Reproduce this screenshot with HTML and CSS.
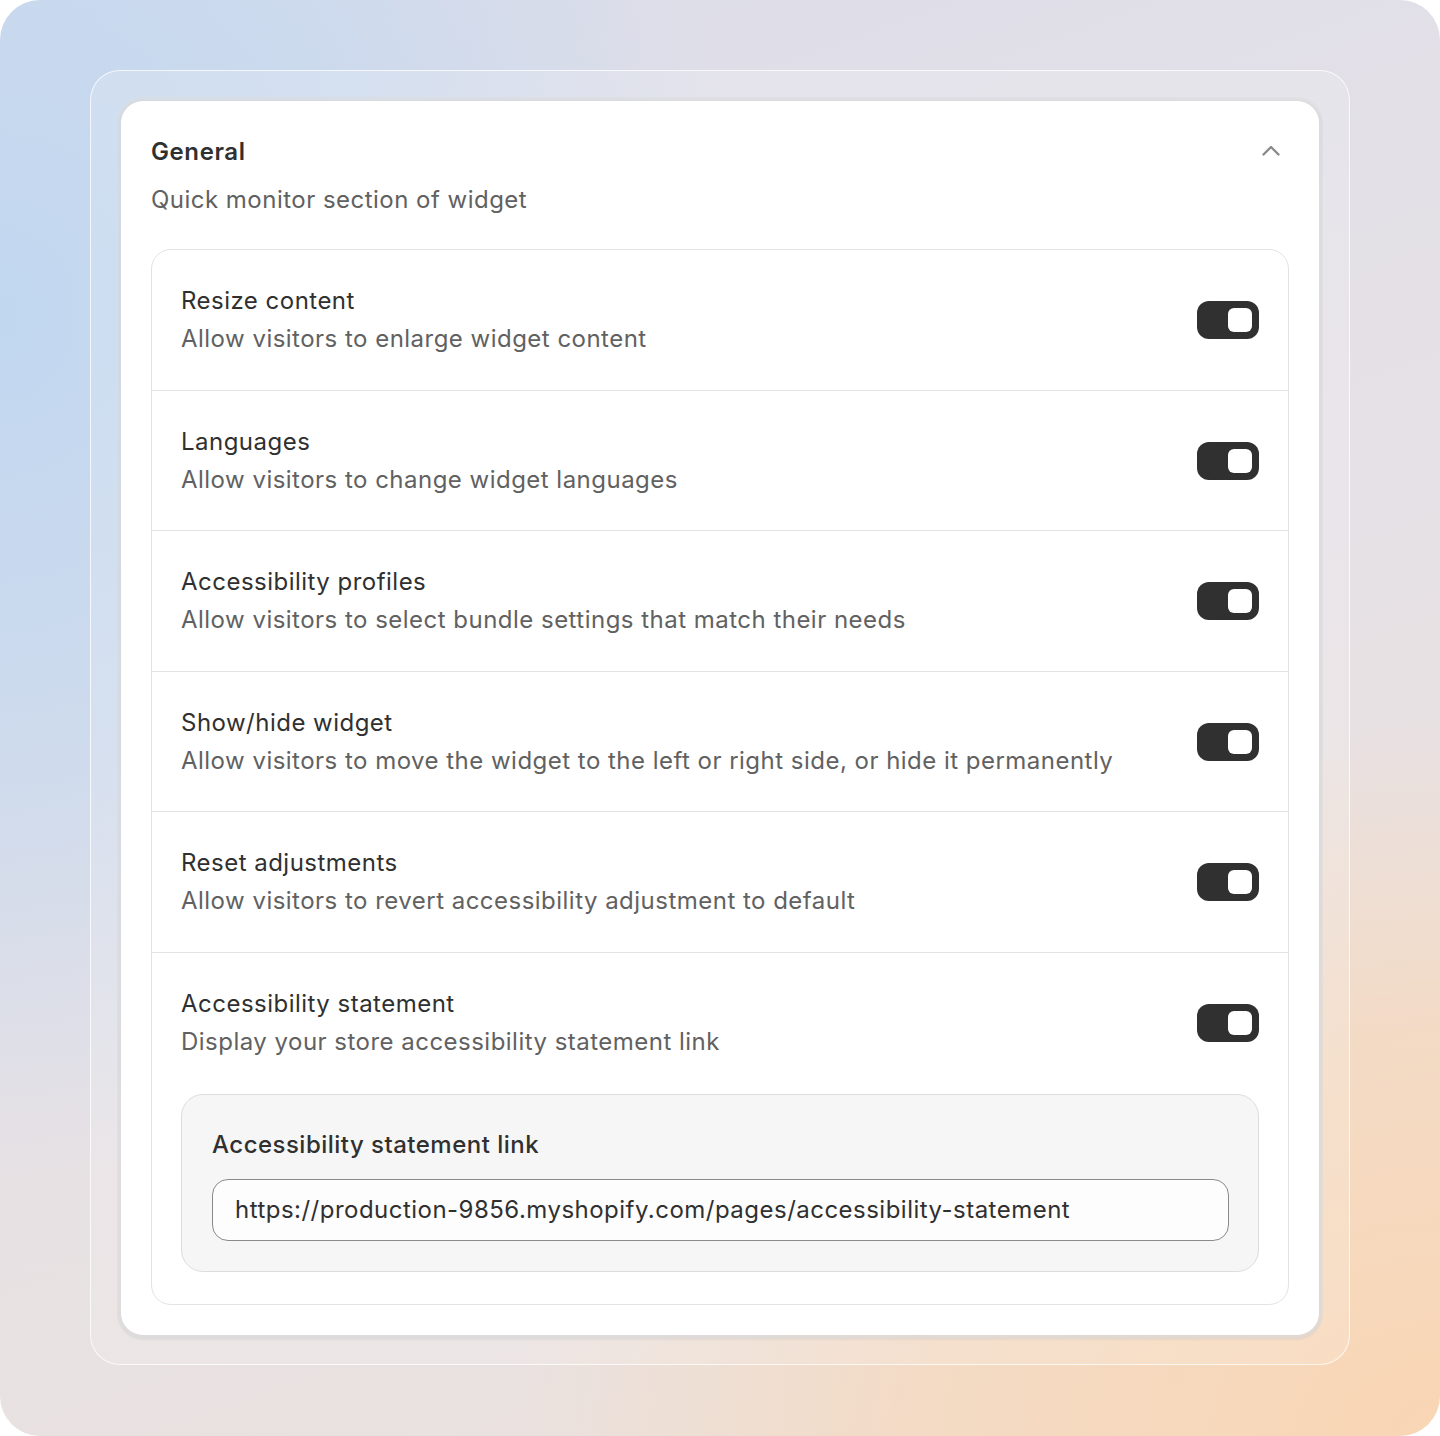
FILE: index.html
```html
<!DOCTYPE html>
<html lang="en">
<head>
<meta charset="utf-8">
<title>General settings</title>
<link rel="stylesheet" href="styles.css">
</head>
<body>
<div class="backdrop">
  <div class="frame">
    <section class="card">
      <header class="card-head">
        <div class="head-text">
          <h2 class="card-title">General</h2>
          <p class="card-sub">Quick monitor section of widget</p>
        </div>
        <button class="collapse" aria-label="Collapse section">
          <svg width="22" height="22" viewBox="0 0 22 22" fill="none"><path d="M3.5 14.5L11 7L18.5 14.5" stroke="#8a8a8a" stroke-width="2.4" stroke-linecap="round" stroke-linejoin="round"/></svg>
        </button>
      </header>

      <div class="list">
        <div class="row">
          <div class="row-main">
            <div class="row-text">
              <div class="row-title">Resize content</div>
              <div class="row-desc">Allow visitors to enlarge widget content</div>
            </div>
            <span class="toggle"><span class="knob"></span></span>
          </div>
        </div>
        <div class="row">
          <div class="row-main">
            <div class="row-text">
              <div class="row-title">Languages</div>
              <div class="row-desc">Allow visitors to change widget languages</div>
            </div>
            <span class="toggle"><span class="knob"></span></span>
          </div>
        </div>
        <div class="row">
          <div class="row-main">
            <div class="row-text">
              <div class="row-title">Accessibility profiles</div>
              <div class="row-desc">Allow visitors to select bundle settings that match their needs</div>
            </div>
            <span class="toggle"><span class="knob"></span></span>
          </div>
        </div>
        <div class="row">
          <div class="row-main">
            <div class="row-text">
              <div class="row-title">Show/hide widget</div>
              <div class="row-desc">Allow visitors to move the widget to the left or right side, or hide it permanently</div>
            </div>
            <span class="toggle"><span class="knob"></span></span>
          </div>
        </div>
        <div class="row">
          <div class="row-main">
            <div class="row-text">
              <div class="row-title">Reset adjustments</div>
              <div class="row-desc">Allow visitors to revert accessibility adjustment to default</div>
            </div>
            <span class="toggle"><span class="knob"></span></span>
          </div>
        </div>
        <div class="row row-last">
          <div class="row-main">
            <div class="row-text">
              <div class="row-title">Accessibility statement</div>
              <div class="row-desc">Display your store accessibility statement link</div>
            </div>
            <span class="toggle"><span class="knob"></span></span>
          </div>
          <div class="subpanel">
            <div class="field-label">Accessibility statement link</div>
            <div class="field">https://production-9856.myshopify.com/pages/accessibility-statement</div>
          </div>
        </div>
      </div>
    </section>
  </div>
</div>
</body>
</html>
```

FILE: styles.css
```css
* {
  box-sizing: border-box;
}

html, body {
  margin: 0;
  padding: 0;
  background: #ffffff;
}

body {
  font-family: Inter, "Noto Sans", "Liberation Sans", sans-serif;
  color: #303030;
  letter-spacing: 0.48px;
}

/* soft blue-to-peach backdrop behind the settings card */
.backdrop {
  width: 1440px;
  height: 1436px;
  border-radius: 40px;
  background:
    radial-gradient(ellipse 1000px 1150px at 0% 22%, rgba(193, 215, 240, 1) 0%, rgba(193, 215, 240, 0.6) 40%, rgba(193, 215, 240, 0) 75%),
    radial-gradient(ellipse 1150px 900px at 100% 100%, rgba(249, 214, 180, 1) 0%, rgba(249, 214, 180, 0.6) 45%, rgba(249, 214, 180, 0) 80%),
    linear-gradient(160deg, #dcdde9 0%, #e6e1e6 50%, #ece2dc 100%);
  padding: 70px 90px 71px 90px;
}

.frame {
  height: 100%;
  border-radius: 30px;
  border: 1.5px solid rgba(255, 255, 255, 0.75);
  background: rgba(255, 255, 255, 0.16);
  padding: 26px;
}

.card {
  background: #ffffff;
  border-radius: 22px;
  box-shadow: 0 0 0 4px rgba(220, 220, 222, 0.6), 0 2px 2px 3px rgba(0, 0, 0, 0.05);
  margin: 4px;
  padding: 32px 30px 30px 30px;
}

.card-head {
  display: flex;
  justify-content: space-between;
  align-items: flex-start;
}

.card-title {
  margin: 0;
  font-size: 24px;
  line-height: 38px;
  font-weight: 600;
  letter-spacing: 0.6px;
  color: #303030;
}

.card-sub {
  margin: 10px 0 0 0;
  font-size: 24px;
  line-height: 38px;
  color: #616161;
}

.collapse {
  border: 0;
  background: none;
  padding: 0;
  margin: 7px 7px 0 0;
  width: 22px;
  height: 22px;
  display: flex;
}

.list {
  margin-top: 30px;
  border: 1.5px solid #e3e3e3;
  border-radius: 20px;
  overflow: hidden;
}

.row {
  padding: 32px 29px 31.5px 29px;
}

.row + .row {
  border-top: 1.5px solid #e3e3e3;
}

.row-last {
  padding-bottom: 32px;
}

.row-main {
  display: flex;
  justify-content: space-between;
  align-items: center;
}

.row-title {
  font-size: 24px;
  line-height: 38px;
  color: #303030;
}

.row-desc {
  font-size: 24px;
  line-height: 38px;
  color: #616161;
}

.toggle {
  width: 62px;
  height: 38px;
  border-radius: 12px;
  background: #303030;
  display: flex;
  align-items: center;
  justify-content: flex-end;
  padding-right: 7px;
}

.knob {
  width: 24px;
  height: 24px;
  border-radius: 6px;
  background: #ffffff;
}

.subpanel {
  margin-top: 33px;
  background: #f6f6f6;
  border: 1.5px solid #dddddd;
  border-radius: 22px;
  padding: 31px 29px 30px 30px;
}

.field-label {
  font-size: 24px;
  line-height: 38px;
  font-weight: 500;
  color: #303030;
}

.field {
  margin-top: 15px;
  height: 62px;
  border: 1.5px solid #8a8a8a;
  border-radius: 16px;
  background: #fdfdfd;
  padding: 0 22px;
  display: flex;
  align-items: center;
  font-size: 24px;
  color: #303030;
}
```
